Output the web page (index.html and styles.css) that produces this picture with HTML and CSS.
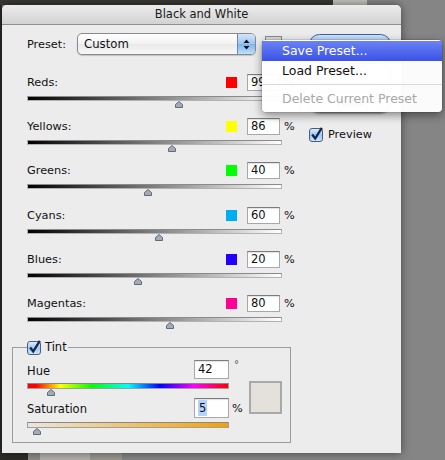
FILE: index.html
```html
<!DOCTYPE html>
<html>
<head>
<meta charset="utf-8">
<link rel="stylesheet" href="styles.css">
</head>
<body>
<div class="dialog">
  <div class="titlebar">Black and White</div>
  <div class="content">
    <div class="main">
      <div class="preset">
        <span class="preset-label">Preset:</span>
        <div class="select">
          <span class="select-value">Custom</span>
          <span class="stepper"><svg width="7" height="11" viewBox="0 0 7 11"><polygon points="3.5,0.5 6.5,4 0.5,4" fill="#111"/><polygon points="0.5,7 6.5,7 3.5,10.5" fill="#111"/></svg></span>
        </div>
        <span class="menu-icon"></span>
      </div>
      <div class="rows">
        <div class="row">
          <div class="row-top"><span class="row-label">Reds:</span><span class="swatch red"></span><span class="num">99</span><span class="unit">%</span></div>
          <div class="track"></div>
          <svg class="thumb" style="margin-left:148px" width="8" height="7" viewBox="0 0 8 7"><polygon points="4,0.5 7.5,3.5 7.5,6.5 0.5,6.5 0.5,3.5" fill="#a3acb6" stroke="#626b76"/></svg>
        </div>
        <div class="row">
          <div class="row-top"><span class="row-label">Yellows:</span><span class="swatch yellow"></span><span class="num">86</span><span class="unit">%</span></div>
          <div class="track"></div>
          <svg class="thumb" style="margin-left:141px" width="8" height="7" viewBox="0 0 8 7"><polygon points="4,0.5 7.5,3.5 7.5,6.5 0.5,6.5 0.5,3.5" fill="#a3acb6" stroke="#626b76"/></svg>
        </div>
        <div class="row">
          <div class="row-top"><span class="row-label">Greens:</span><span class="swatch green"></span><span class="num">40</span><span class="unit">%</span></div>
          <div class="track"></div>
          <svg class="thumb" style="margin-left:117px" width="8" height="7" viewBox="0 0 8 7"><polygon points="4,0.5 7.5,3.5 7.5,6.5 0.5,6.5 0.5,3.5" fill="#a3acb6" stroke="#626b76"/></svg>
        </div>
        <div class="row">
          <div class="row-top"><span class="row-label">Cyans:</span><span class="swatch cyan"></span><span class="num">60</span><span class="unit">%</span></div>
          <div class="track"></div>
          <svg class="thumb" style="margin-left:128px" width="8" height="7" viewBox="0 0 8 7"><polygon points="4,0.5 7.5,3.5 7.5,6.5 0.5,6.5 0.5,3.5" fill="#a3acb6" stroke="#626b76"/></svg>
        </div>
        <div class="row">
          <div class="row-top"><span class="row-label">Blues:</span><span class="swatch blue"></span><span class="num">20</span><span class="unit">%</span></div>
          <div class="track"></div>
          <svg class="thumb" style="margin-left:107px" width="8" height="7" viewBox="0 0 8 7"><polygon points="4,0.5 7.5,3.5 7.5,6.5 0.5,6.5 0.5,3.5" fill="#a3acb6" stroke="#626b76"/></svg>
        </div>
        <div class="row">
          <div class="row-top"><span class="row-label">Magentas:</span><span class="swatch magenta"></span><span class="num">80</span><span class="unit">%</span></div>
          <div class="track"></div>
          <svg class="thumb" style="margin-left:139px" width="8" height="7" viewBox="0 0 8 7"><polygon points="4,0.5 7.5,3.5 7.5,6.5 0.5,6.5 0.5,3.5" fill="#a3acb6" stroke="#626b76"/></svg>
        </div>
      </div>
      <fieldset class="tint">
        <legend>
          <svg class="check" width="15" height="15" viewBox="0 0 15 15"><defs><linearGradient id="cbA" x1="0" y1="0" x2="0" y2="1"><stop offset="0" stop-color="#e2effc"/><stop offset=".5" stop-color="#9cc7f2"/><stop offset="1" stop-color="#d3e8fc"/></linearGradient></defs><rect x="0.5" y="1.5" width="13" height="13" rx="2.5" fill="url(#cbA)" stroke="#4c5d78"/><path d="M3.2 7.5 L6.2 11.5 L12.8 0.8" fill="none" stroke="#15244e" stroke-width="2.3"/></svg>
          <span>Tint</span>
        </legend>
        <div class="tint-body">
          <div class="tint-controls">
            <div class="t-top"><span class="t-label">Hue</span><span class="num wide">42</span><span class="suffix deg">°</span></div>
            <div class="t-track hue"></div>
            <svg class="thumb" style="margin-left:20px" width="8" height="7" viewBox="0 0 8 7"><polygon points="4,0.5 7.5,3.5 7.5,6.5 0.5,6.5 0.5,3.5" fill="#a3acb6" stroke="#626b76"/></svg>
            <div class="t-top sat-top"><span class="t-label">Saturation</span><span class="num wide tall"><span class="sel">5</span></span><span class="suffix">%</span></div>
            <div class="t-track sat"></div>
            <svg class="thumb" style="margin-left:6px" width="8" height="7" viewBox="0 0 8 7"><polygon points="4,0.5 7.5,3.5 7.5,6.5 0.5,6.5 0.5,3.5" fill="#a3acb6" stroke="#626b76"/></svg>
          </div>
          <div class="tint-swatch"></div>
        </div>
      </fieldset>
    </div>
    <div class="side">
      <div class="btn default">OK</div>
      <div class="btn">Cancel</div>
      <div class="btn">Auto</div>
      <div class="preview">
        <svg class="check" width="15" height="15" viewBox="0 0 15 15"><defs><linearGradient id="cbB" x1="0" y1="0" x2="0" y2="1"><stop offset="0" stop-color="#e2effc"/><stop offset=".5" stop-color="#9cc7f2"/><stop offset="1" stop-color="#d3e8fc"/></linearGradient></defs><rect x="0.5" y="1.5" width="13" height="13" rx="2.5" fill="url(#cbB)" stroke="#4c5d78"/><path d="M3.2 7.5 L6.2 11.5 L12.8 0.8" fill="none" stroke="#15244e" stroke-width="2.3"/></svg>
        <span>Preview</span>
      </div>
    </div>
  </div>
  <div class="menu">
    <div class="menu-item active">Save Preset...</div>
    <div class="menu-item">Load Preset...</div>
    <div class="menu-sep"></div>
    <div class="menu-item disabled">Delete Current Preset</div>
  </div>
</div>
</body>
</html>
```

FILE: styles.css
```css
* { box-sizing: border-box; }
html, body { margin: 0; width: 445px; height: 460px; overflow: hidden; }
body {
  font-family: "DejaVu Sans", sans-serif;
  font-size: 11.3px;
  color: #111;
  background:
    linear-gradient(to right, #2e2c29 0 28px, #8f8c87 28px 40px, #b4b1ab 40px 90px, #9a9690 90px 122px, transparent 122px) left bottom / 100% 7px no-repeat,
    linear-gradient(to right, #3a3834 0 333px, #c4c4bf 333px 367px, transparent 367px) left top / 100% 5px no-repeat,
    linear-gradient(to right, #2c2a27 0 2px, transparent 2px) left top / 100% 100% no-repeat,
    #858585;
}
.dialog {
  position: relative;
  margin: 5px 0 0 2px;
  width: 399px;
  height: 448px;
  background: #ececec;
  border-radius: 5px 5px 0 0;
  box-shadow: 0 0 10px rgba(0,0,0,.5);
}
.titlebar {
  height: 20px;
  line-height: 19px;
  text-align: center;
  font-size: 11.5px;
  color: #1a1a1a;
  background: linear-gradient(#ececec, #d2d2d2);
  border-bottom: 1px solid #8e8e8e;
  border-radius: 5px 5px 0 0;
}
.content { display: flex; padding: 8px 0 0 25px; }
.main { width: 267px; }
.side { margin-left: 15px; width: 82px; display: flex; flex-direction: column; padding-top: 1px; }

.preset { display: flex; align-items: center; height: 22px; }
.preset-label { width: 50px; }
.select {
  width: 179px; height: 22px;
  border: 1px solid #8a8a8a; border-radius: 5px;
  background: linear-gradient(#ffffff, #f2f2f2 50%, #e9e9e9 51%, #f8f8f8);
  display: flex; align-items: stretch; overflow: hidden;
  box-shadow: 0 1px 1px rgba(0,0,0,.18);
}
.select-value { flex: 1; padding-left: 6px; font-size: 11.7px; line-height: 20px; }
.stepper {
  width: 18px;
  background: linear-gradient(#d4e5f9, #9cc6f3 50%, #7fb4ef 51%, #bfe0fc);
  border-left: 1px solid #6f86ab;
  display: flex; align-items: center; justify-content: center;
}
.stepper svg { display: block; }
.menu-icon {
  width: 17px; height: 16px; margin-left: 9px;
  border: 1px solid #8a8a8a;
  background: linear-gradient(#dcdcdc, #b9b9b9);
}

.rows { margin-top: 19px; }
.row { height: 44.2px; }
.row-top { display: flex; align-items: center; height: 17px; }
.row-label { flex: 1; }
.swatch { width: 11px; height: 11px; margin-right: 10px; }
.red { background: #ff0000; }
.yellow { background: #ffff00; }
.green { background: #00ff00; }
.cyan { background: #00aeef; }
.blue { background: #2200ff; }
.magenta { background: #ff0090; }
.num {
  width: 33px; height: 17px;
  background: #fff;
  border: 1px solid #a8a8a8; border-top-color: #7c7c7c;
  box-shadow: inset 0 1px 1px rgba(0,0,0,.12);
  padding-left: 3px;
  line-height: 15px;
  font-size: 11.5px;
}
.unit { width: 10px; margin-left: 4px; }
.track {
  margin-top: 5px;
  width: 255px; height: 5px;
  border: 1px solid #b2b2b2; border-top-color: #8a8a8a;
  background: linear-gradient(to right, #000, #808080 50%, #fff);
}
.thumb { display: block; }

.tint {
  margin: 0 0 0 -15px;
  width: 279px;
  min-width: 0;
  border: 1px solid #9c9c9c;
  padding: 0 8px 7px 14px;
}
.tint legend {
  padding: 0 1px 0 0;
  display: flex; align-items: center; gap: 3px;
  height: 16px;
  font-size: 11.5px;
}
.check { display: block; }
.tint-body { display: flex; align-items: center; margin-top: 5px; }
.tint-controls { width: 214px; }
.t-top { display: flex; align-items: center; height: 19px; }
.sat-top { height: 20px; margin-top: 2px; }
.t-label { flex: 1; font-size: 11.5px; padding-top: 2px; }
.num.wide { width: 35px; height: 19px; line-height: 17px; }
.num.tall { height: 20px; line-height: 18px; }
.sel { background: #b4d4fc; padding: 1px 1px; }
.suffix { width: 12px; padding-left: 3px; align-self: center; }
.deg { align-self: flex-start; font-size: 10px; line-height: 10px; padding-left: 5px; color: #555; }
.t-track {
  margin-top: 4px;
  width: 202px; height: 6px;
  border: 1px solid #a0a0a0; border-top-color: #888;
}
.hue { background: linear-gradient(to right, #ff0000 0%, #ff0000 4%, #ffff00 16%, #00ff00 32%, #00ffff 50%, #0000ff 66%, #ff00ff 83%, #ff0000 100%); }
.sat { background: linear-gradient(to right, #ebe6de, #f4a100); }
.tint-swatch {
  width: 33px; height: 33px; margin-left: 8px;
  background: #e4e0da;
  border: 2px solid #a9a9a9;
}

.btn {
  height: 21px;
  border-radius: 11px;
  border: 1px solid #8b8b8b;
  background: linear-gradient(#ffffff, #ececec 50%, #dedede 51%, #f6f6f6);
  text-align: center;
  line-height: 19px;
  margin-bottom: 8px;
  box-shadow: 0 1px 2px rgba(0,0,0,.35);
}
.btn.default {
  background: linear-gradient(#d2e5fb, #93bff3 50%, #6fa8ee 51%, #bcdcfd);
  border-color: #3c5ea8;
}
.preview { display: flex; align-items: center; gap: 4px; margin-top: 6px; height: 15px; }

.menu {
  position: absolute;
  left: 260px; top: 35px;
  width: 180px; height: 72px;
  background: rgba(255,255,255,.97);
  border-radius: 4px;
  box-shadow: 0 3px 10px rgba(0,0,0,.45), 0 0 0 1px rgba(0,0,0,.08);
  padding-top: 1px;
  font-size: 12.5px;
  color: #111;
}
.menu-item { height: 20px; line-height: 20px; padding-left: 20px; white-space: nowrap; }
.menu-item.active {
  color: #fff;
  background: linear-gradient(#6b82f4, #3a52e6);
}
.menu-item.disabled { color: #a8a8a8; }
.menu-sep { height: 1px; background: #dadada; margin: 3px 0 4px; }
```
